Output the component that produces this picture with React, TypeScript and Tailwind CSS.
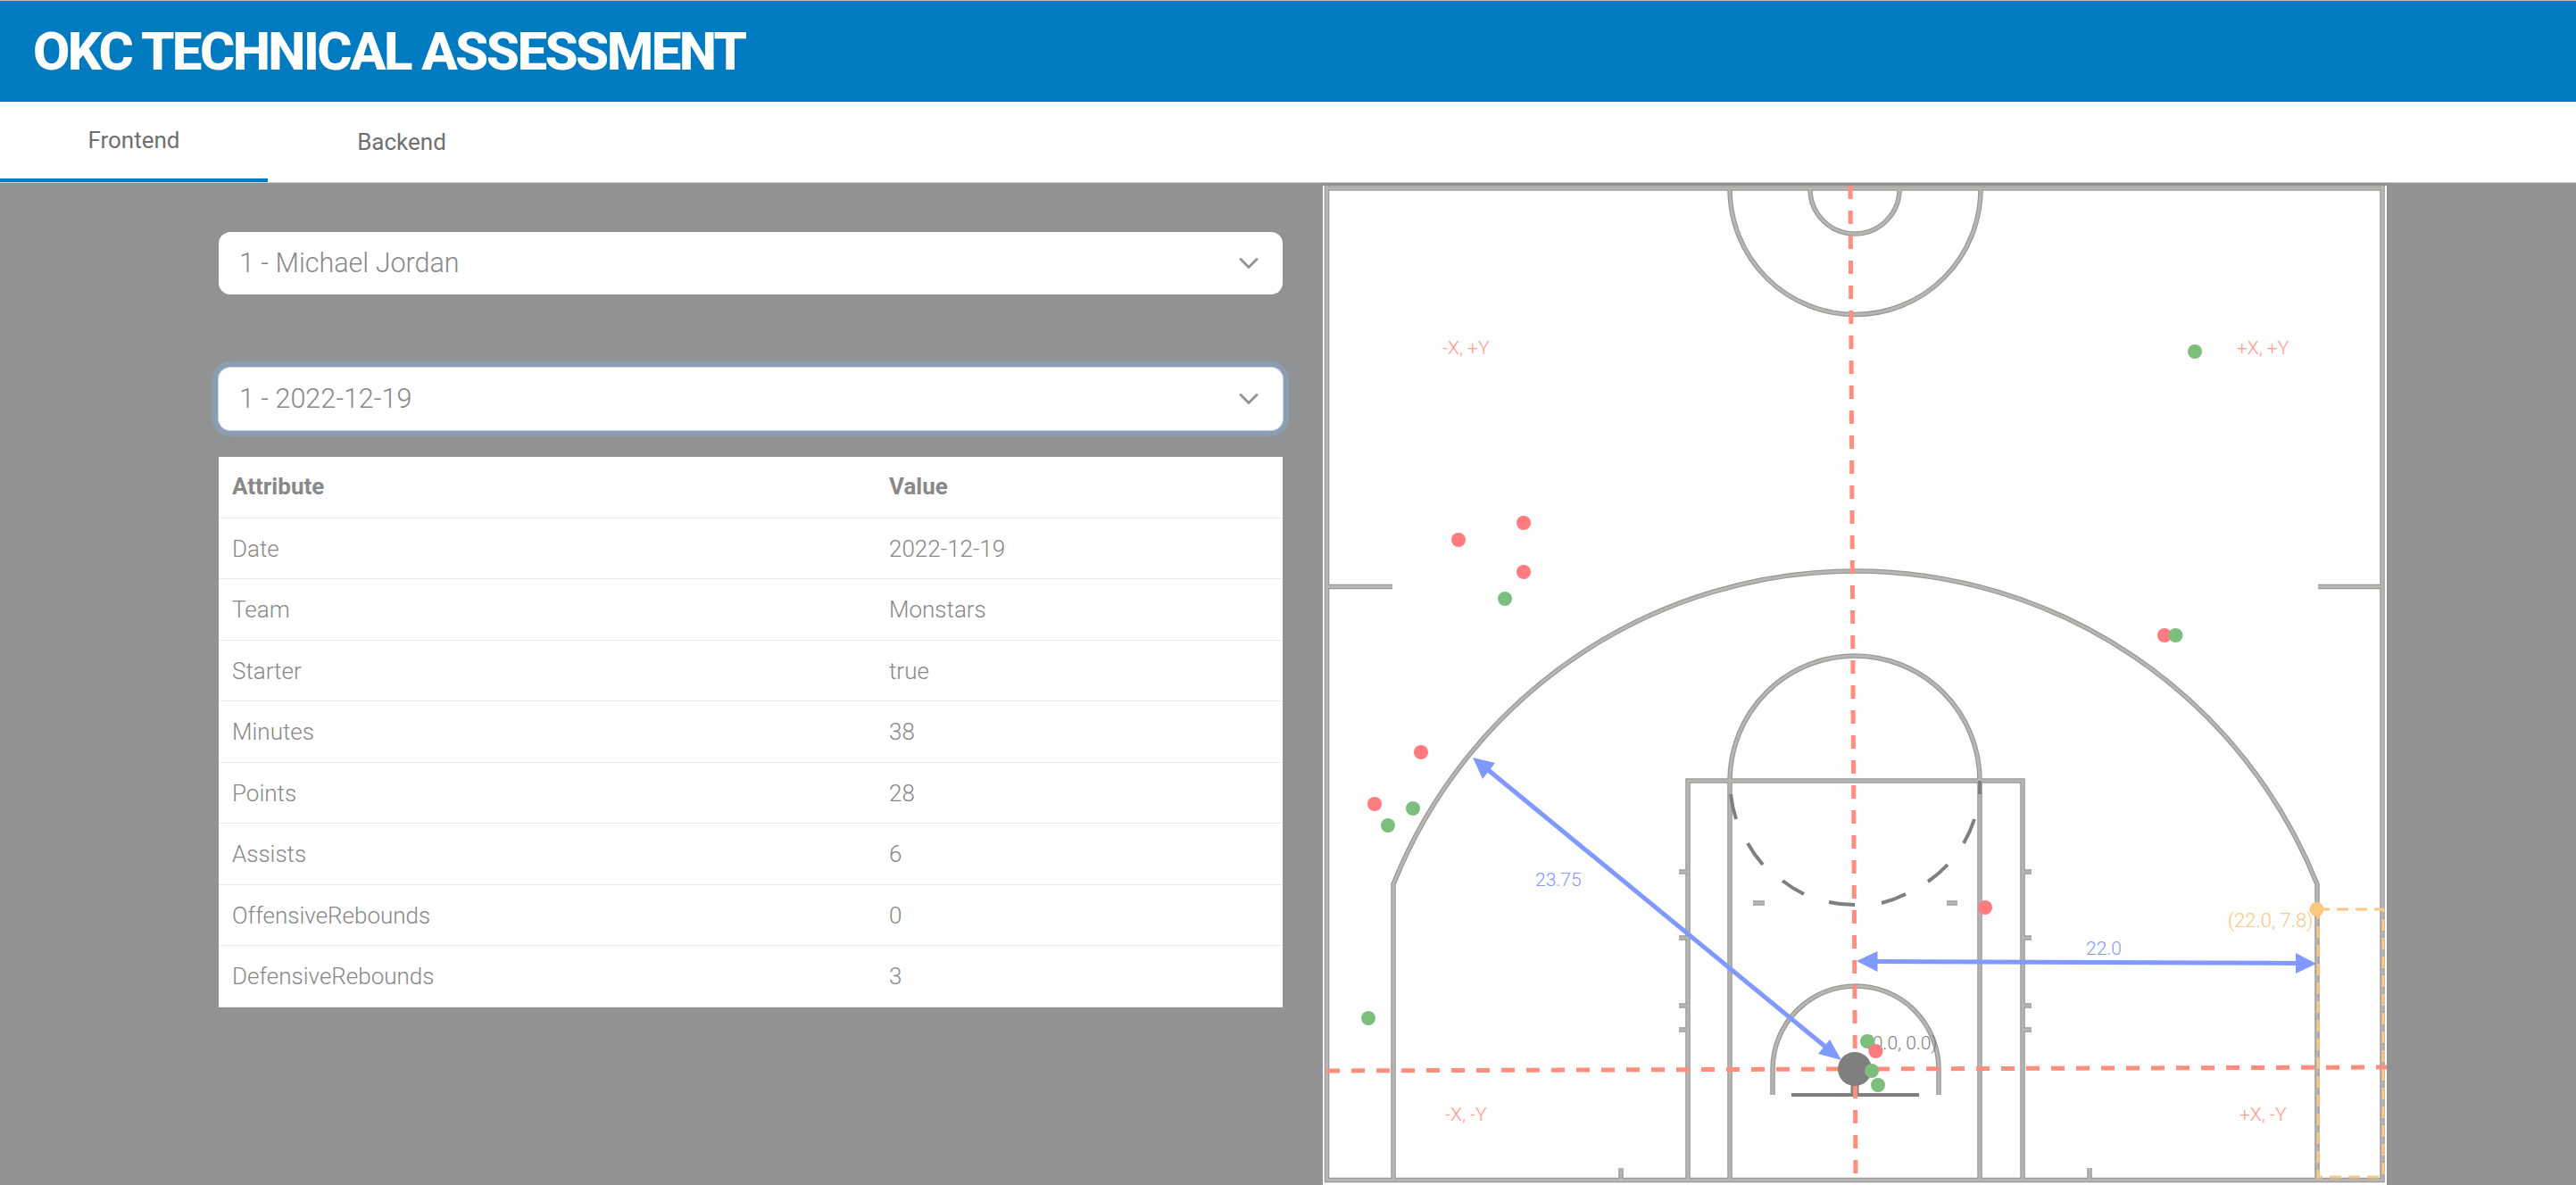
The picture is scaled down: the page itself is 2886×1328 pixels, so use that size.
import React from 'react';
import { ChevronDown } from 'lucide-react';

const rows = [
  ['Date', '2022-12-19'],
  ['Team', 'Monstars'],
  ['Starter', 'true'],
  ['Minutes', '38'],
  ['Points', '28'],
  ['Assists', '6'],
  ['OffensiveRebounds', '0'],
  ['DefensiveRebounds', '3'],
];

const RED = '#ff7b7f';
const GREEN = '#7cbf7c';

const shots: [number, number, string][] = [
  [2459, 394, GREEN],
  [1707, 586, RED],
  [1634, 605, RED],
  [1707, 641, RED],
  [1686, 671, GREEN],
  [2425, 712, RED],
  [2437.5, 712, GREEN],
  [1592, 843, RED],
  [1540, 901, RED],
  [1583, 906, GREEN],
  [1555, 925, GREEN],
  [1533, 1141, GREEN],
  [2224, 1017, RED],
  [2092, 1167, GREEN],
  [2101.5, 1178, RED],
  [2097, 1200, GREEN],
  [2104, 1216, GREEN],
];

// everything the court draws in one stroke, in page coordinates
const courtLines = [
  'M1486.5 208V1322.5H2669V208',
  'M1485 211H2672',
  'M1561 1322V991A557 557 0 0 1 2596 991V1322',
  'M1891 1322V875H2266V1322',
  'M1938 1322V875A140 140 0 0 1 2218 875V1322',
  'M1986 1227V1198A93 93 0 0 1 2172 1198V1227',
  'M1938 212A140 140 0 0 0 2219 212',
  'M2028 212A50 50 0 0 0 2128 212',
  'M1488 657.5H1560M2597 657.5H2668',
  'M1881 977H1891M1881 1051H1891M1881 1127H1891M1881 1154H1891',
  'M2266 977H2276M2266 1051H2276M2266 1127H2276M2266 1154H2276',
  'M1964 1012H1977M2181 1012H2193',
  'M1816 1309V1322M2341 1309V1322',
];

const ftDashes = [
  'M1939 890A140 140 0 0 0 1945 918',
  'M1958 945A140 140 0 0 0 1975 969',
  'M1997 987A140 140 0 0 0 2021 1002',
  'M2049 1011A140 140 0 0 0 2078 1014',
  'M2108 1012A140 140 0 0 0 2135 1002',
  'M2160 988A140 140 0 0 0 2182 969',
  'M2200 945A140 140 0 0 0 2212 918',
  'M2218 890V875',
];

const Court = () => (
  <svg width={1192} height={1123} viewBox="1482 205 1192 1123" className="block shrink-0 bg-[#fefefe]">
    <rect x={1482} y={205} width={1192} height={3} fill="#8f9092" />
    <g fill="none">
      {courtLines.map((d) => (
        <path key={d} d={d} stroke="#9b9997" strokeWidth={5.5} />
      ))}
      {courtLines.map((d) => (
        <path key={d} d={d} stroke="#b8b6b3" strokeWidth={3} />
      ))}
      {ftDashes.map((d) => (
        <path key={d} d={d} stroke="#7f7f7f" strokeWidth={4} />
      ))}
      <path d="M2007 1227H2150" stroke="#7f7f7f" strokeWidth={4} />
      <path d="M2078 1211V1227" stroke="#7f7f7f" strokeWidth={9} />
    </g>

    <text x={2091} y={1176} fontSize={21} fontWeight={300} fill="#7f7f7f" fontFamily="Roboto, sans-serif">(0.0, 0.0)</text>

    <g fill="none" stroke="#ff8e7e" strokeWidth={5} strokeDasharray="15 13">
      <path d="M2073 208L2079 1322" />
      <path d="M1486 1200L2674 1196" />
    </g>
    <ellipse cx={2078} cy={1198} rx={19} ry={19} fill="#7f7f7f" />

    <g fill="none" stroke="#fdc77e" strokeWidth={3} strokeDasharray="13 8">
      <rect x={2597} y={1019} width={73} height={300} />
    </g>
    <circle cx={2595.5} cy={1019} r={8} fill="#fdc77e" />
    <text x={2496} y={1039} fontSize={22} fontWeight={300} fill="#fdc77e" fontFamily="Roboto, sans-serif">(22.0, 7.8)</text>

    <g fill="#8099ff" stroke="none">
      <path d="M1665 861L2045 1173" stroke="#8099ff" strokeWidth={5} />
      <polygon points="1650,849 1675,855 1661,873" />
      <polygon points="2063,1188 2050,1165 2037,1181" />
      <path d="M2100 1077.5L2575 1079.5" stroke="#8099ff" strokeWidth={5} />
      <polygon points="2080,1077 2103.5,1066 2103.5,1089" />
      <polygon points="2595,1080 2572,1068 2572,1091" />
    </g>
    <text x={1720} y={993} fontSize={21} fontWeight={300} fill="#8099ff" fontFamily="Roboto, sans-serif">23.75</text>
    <text x={2337} y={1070} fontSize={21} fontWeight={300} fill="#8099ff" fontFamily="Roboto, sans-serif">22.0</text>

    <g fontSize={21} fontWeight={300} fill="#ff9a8a" fontFamily="Roboto, sans-serif">
      <text x={1616} y={397}>-X, +Y</text>
      <text x={2506} y={397}>+X, +Y</text>
      <text x={1619} y={1256}>-X, -Y</text>
      <text x={2509} y={1256}>+X, -Y</text>
    </g>

    {shots.map(([x, y, fill]) => (
      <circle key={`${x}-${y}`} cx={x} cy={y} r={8} fill={fill} />
    ))}
  </svg>
);

const FakeSelect = ({ label, focused = false }: { label: string; focused?: boolean }) => (
  <div
    className={
      'flex h-[70px] items-center justify-between rounded-[13px] bg-white pl-[23px] pr-[20px] text-[30.5px] font-light text-[#888888] ' +
      (focused ? 'shadow-[0_0_0_1px_#c2d3f0,0_0_0_7px_#8c9db2]' : '')
    }
  >
    <span>{label}</span>
    <ChevronDown className="h-9 w-9 text-[#959595]" strokeWidth={2} />
  </div>
);

export default function App() {
  return (
    <div className="flex h-screen flex-col overflow-hidden bg-[#919294] font-['Roboto',sans-serif]">
      <header className="flex h-[114px] shrink-0 items-center border-t border-[#b9b9b9] bg-[#007ac1] pl-[37px]">
        <h1 className="text-[60px] font-extrabold leading-none tracking-[-2.6px] text-white">OKC TECHNICAL ASSESSMENT</h1>
      </header>

      <nav className="flex h-[91px] shrink-0 border-b border-[#cfcfcf] bg-white text-[26px] font-normal text-[#6f6f6f]">
        <div className="flex w-[300px] items-center justify-center border-b-4 border-[#007ac1]">Frontend</div>
        <div className="flex w-[300px] items-center justify-center">Backend</div>
      </nav>

      <main className="flex min-h-0 flex-1 pl-[245px]">
        <section className="mr-[45px] w-[1192px] shrink-0 pt-[55px]">
          <FakeSelect label="1 - Michael Jordan" />
          <div className="mt-[82px]">
            <FakeSelect label="1 - 2022-12-19" focused />
          </div>
          <table className="mt-[30px] w-full table-fixed bg-white text-[26px] font-light text-[#888888]">
            <thead>
              <tr className="h-[68px] border-b border-[#ececec] text-left">
                <th className="w-[736px] pl-[15px] font-bold">Attribute</th>
                <th className="pl-[15px] font-bold">Value</th>
              </tr>
            </thead>
            <tbody>
              {rows.map(([name, value]) => (
                <tr key={name} className="h-[68.5px] border-b border-[#ececec]">
                  <td className="pl-[15px] pt-[2px]">{name}</td>
                  <td className="pl-[15px] pt-[2px]">{value}</td>
                </tr>
              ))}
            </tbody>
          </table>
        </section>
        <Court />
      </main>
    </div>
  );
}
